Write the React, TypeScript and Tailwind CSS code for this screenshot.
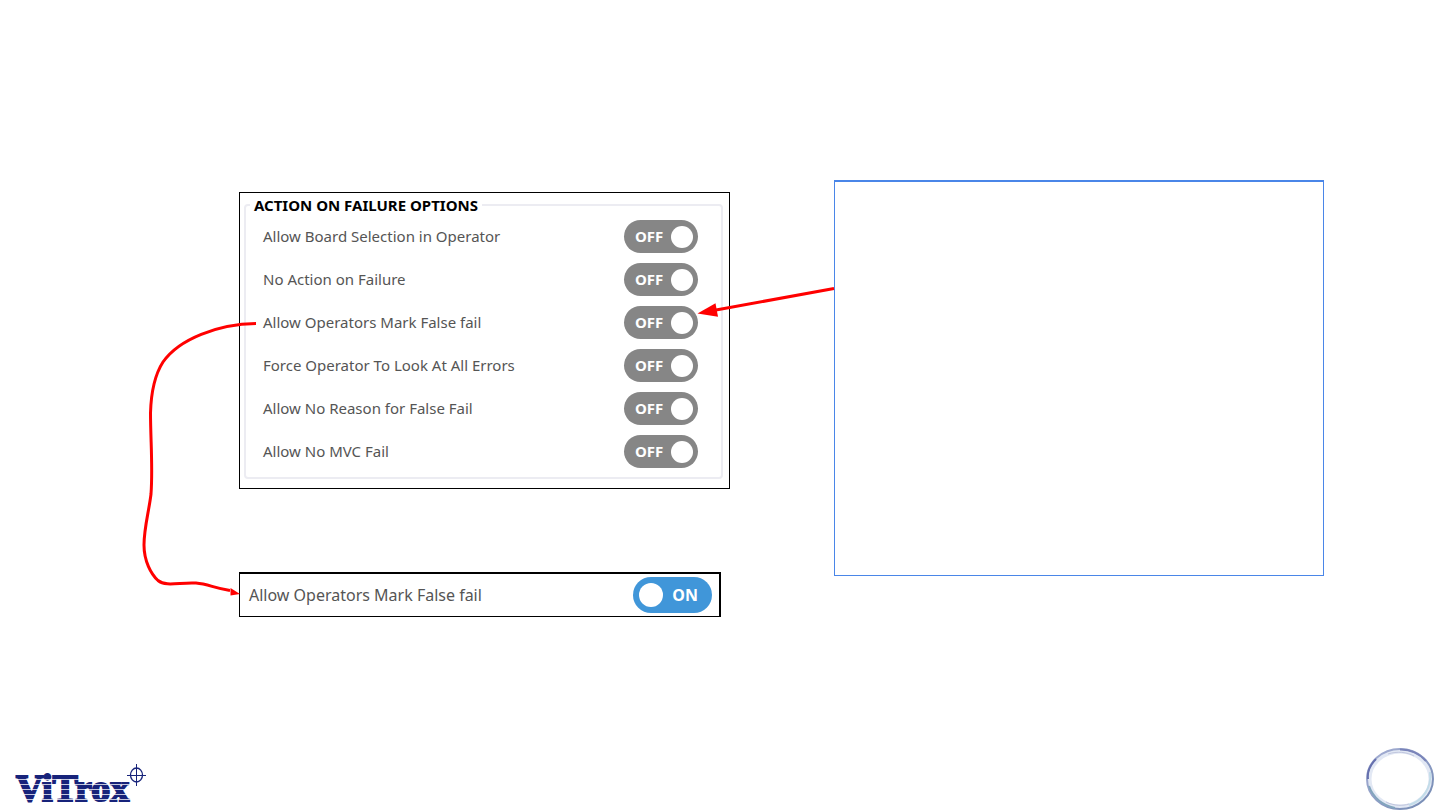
import React, { useState } from "react";

const failureOptions = [
  "Allow Board Selection in Operator",
  "No Action on Failure",
  "Allow Operators Mark False fail",
  "Force Operator To Look At All Errors",
  "Allow No Reason for False Fail",
  "Allow No MVC Fail",
];

type ToggleProps = {
  label: string;
  defaultOn?: boolean;
  large?: boolean;
};

const ToggleRow = ({ label, defaultOn = false, large = false }: ToggleProps) => {
  const [on, setOn] = useState(defaultOn);
  return (
    <label
      className={
        large
          ? "relative flex items-center justify-between h-[42px] pl-[9px] pr-[7px] text-base cursor-pointer"
          : "relative flex items-center justify-between h-[43px] pl-[17px] pr-[23px] text-[15px] cursor-pointer"
      }
    >
      <span>{label}</span>
      <input
        type="checkbox"
        className="sr-only"
        checked={on}
        onChange={(e) => setOn(e.target.checked)}
      />
      <span
        className={`flex items-center justify-between rounded-full font-bold text-white ${
          large ? "h-[36px] w-[79px] text-base" : "h-[33px] w-[74px] text-[15px]"
        } ${
          on
            ? "flex-row-reverse bg-[#4096d9] pl-1.5 pr-3.5"
            : "bg-[#868686] pl-[11px] pr-[5px]"
        }`}
      >
        <span>{on ? "ON" : "OFF"}</span>
        <span
          className={
            large
              ? "size-6 rounded-full bg-white"
              : "size-[22px] rounded-full bg-white"
          }
        />
      </span>
    </label>
  );
};

const Connectors = () => (
  <svg
    className="absolute left-0 top-0 pointer-events-none"
    width="840"
    height="620"
    viewBox="0 0 840 620"
    fill="none"
    aria-hidden="true"
  >
    {/* callout to the switch */}
    <path d="M834 288.5L716 310" stroke="#f00" strokeWidth="3" />
    <path d="M697.500 313.500L715.500 303.300L718 316.800Z" fill="#f00" />
    {/* off state to on state */}
    <path
      d="M256 323.500C218 324 179 339 163 362C154 376 151 395 150.500 413C150.500 440 153 467 151 494C149 511 144 528 144 545C144 561 151 574 158 580.500C166 587 180 582 196 583C208 584 214 588 230 590.500"
      stroke="#f00"
      strokeWidth="3"
    />
    <path d="M240 594L230.500 588V595.500Z" fill="#f00" />
  </svg>
);

const Logo = () => (
  <svg width="132" height="46" viewBox="0 0 132 46" role="img" aria-label="ViTrox">
    <text
      x="1"
      y="37"
      fontSize="38"
      fontWeight="700"
      fill="#17237a"
      stroke="#17237a"
      strokeWidth="2"
      className="font-['Liberation_Serif',serif]"
    >
      ViTrox
    </text>
    <path
      d="M0 15.500H116M0 20.500H116M0 25.500H116M0 30.500H116M0 35.500H116"
      stroke="#fff"
      strokeOpacity="0.75"
      strokeWidth="1"
    />
    <g stroke="#17237a" fill="none">
      <ellipse cx="121.500" cy="11" rx="6" ry="7" strokeWidth="1.3" />
      <path d="M112 11.500H131M121.500 0V22" strokeWidth="1" />
    </g>
  </svg>
);

const PageRing = () => (
  <svg width="68" height="62" viewBox="0 0 68 62" fill="none" aria-hidden="true">
    <defs>
      <linearGradient id="ring" x1="0" y1="0" x2="1" y2="1">
        <stop offset="0" stopColor="#a5afd3" />
        <stop offset="0.5" stopColor="#8f9dc6" />
        <stop offset="1" stopColor="#7189b0" />
      </linearGradient>
    </defs>
    <ellipse cx="34" cy="31" rx="31" ry="28" stroke="#e2e8f4" strokeWidth="5" />
    <ellipse cx="34" cy="31" rx="33" ry="30" stroke="url(#ring)" strokeWidth="2" />
    <path d="M2 31C1 23 5 16 10 11" stroke="#6670ae" strokeWidth="2" />
    <path d="M34 1.500C44 1 54 6 60 13" stroke="#7a84b9" strokeWidth="2" />
    <path d="M64 24C66 39 57 53 43 57" stroke="#c2dce9" strokeWidth="2" />
    <path d="M3 38C7 49 16 57 29 60" stroke="#82a5bd" strokeWidth="2" />
    <path d="M22 6C31 3 41 4 48 8M20 54C28 58 37 58 43 56" stroke="#c0c6de" strokeWidth="1" />
  </svg>
);

export default function App() {
  return (
    <div className="relative flex min-h-screen flex-col bg-white text-[#555] font-['Noto_Sans',sans-serif]">
      <main className="flex items-start gap-[104px] pl-[239px] pr-[116px] pt-[180px]">
        <div className="w-[491px] shrink-0 pt-3">
          <section className="border border-black pl-1 pr-1.5 pt-0.5 pb-[9px]">
            <fieldset className="rounded-sm border-2 border-[#ececf2] pb-1">
              <legend className="ml-1 px-1 text-[15px] leading-5 font-bold text-black">
                ACTION ON FAILURE OPTIONS
              </legend>
              {failureOptions.map((option) => (
                <ToggleRow key={option} label={option} />
              ))}
            </fieldset>
          </section>
          <section className="mt-[83px] mr-[9px] border border-t-2 border-r-2 border-black">
            <ToggleRow label="Allow Operators Mark False fail" defaultOn large />
          </section>
        </div>
        <aside className="h-[396px] flex-1 border border-t-2 border-[#4a86e8]" />
      </main>
      <Connectors />
      <footer className="mt-auto flex items-end justify-between pl-[15px] pr-1.5">
        <Logo />
        <PageRing />
      </footer>
    </div>
  );
}
